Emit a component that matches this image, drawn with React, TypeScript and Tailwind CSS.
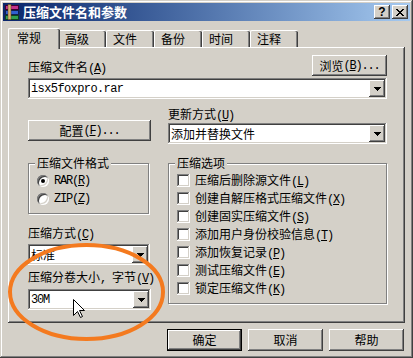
import React from 'react';

const raised =
  'shadow-[inset_-1px_-1px_#404040,inset_1px_1px_#ffffff,inset_-2px_-2px_#808080,inset_2px_2px_#d4d0c8]';
const sunken =
  'shadow-[inset_-1px_-1px_#ffffff,inset_1px_1px_#808080,inset_-2px_-2px_#d4d0c8,inset_2px_2px_#404040]';
const defBtn =
  'shadow-[inset_-1px_-1px_#000000,inset_1px_1px_#000000,inset_-2px_-2px_#404040,inset_2px_2px_#ffffff,inset_-3px_-3px_#808080]';
const mono = "font-['Liberation_Mono',monospace] tracking-[-1.2px]";

const Key = ({ k, tail }: { k: string; tail?: string }) => (
  <span className={mono}>
    (<span className="underline underline-offset-[1px]">{k}</span>){tail}
  </span>
);

const Tri = () => (
  <svg width="7" height="4" shapeRendering="crispEdges">
    <path d="M0 0h7v1h-1v1h-1v1h-1v1h-1v-1h-1v-1h-1v-1h-1z" fill="#000" />
  </svg>
);

const Combo = ({ children, className = '' }: { children: React.ReactNode; className?: string }) => (
  <div className={`h-[21px] bg-white flex p-[2px] ${sunken} ${className}`}>
    <div className="flex-1 flex items-center pl-[1px] whitespace-nowrap overflow-hidden leading-[14px]">
      {children}
    </div>
    <div className={`w-[16px] bg-[#d4d0c8] flex items-center justify-center ${raised}`}>
      <Tri />
    </div>
  </div>
);

const Btn = ({
  children,
  className = '',
  def = false,
}: {
  children: React.ReactNode;
  className?: string;
  def?: boolean;
}) => (
  <div
    className={`h-[21px] bg-[#d4d0c8] flex items-center justify-center whitespace-nowrap leading-[14px] ${
      def ? defBtn : raised
    } ${className}`}
  >
    {children}
  </div>
);

const Group = ({
  title,
  className = '',
  children,
}: {
  title: string;
  className?: string;
  children: React.ReactNode;
}) => (
  <div
    className={`relative border border-[#808080] shadow-[1px_1px_0_#ffffff,inset_1px_1px_0_#ffffff] ${className}`}
  >
    <span className="absolute -top-[8px] left-[6px] px-[2px] bg-[#d4d0c8] leading-[14px]">{title}</span>
    {children}
  </div>
);

const Radio = ({ on }: { on?: boolean }) => (
  <div className="w-[12px] h-[12px] rounded-full bg-white flex items-center justify-center shadow-[inset_1px_1px_#808080,inset_-1px_-1px_#ffffff,inset_2px_2px_#404040,inset_-2px_-2px_#d4d0c8]">
    {on && <div className="w-[4px] h-[4px] rounded-full bg-black" />}
  </div>
);

const Check = () => <div className={`w-[13px] h-[13px] bg-white ${sunken}`} />;

const closeGlyph = ['11....11', '.11..11.', '..1111..', '...11...', '..1111..', '.11..11.', '11....11'];

const options: [string, string][] = [
  ['压缩后删除源文件', 'L'],
  ['创建自解压格式压缩文件', 'X'],
  ['创建固实压缩文件', 'S'],
  ['添加用户身份校验信息', 'T'],
  ['添加恢复记录', 'P'],
  ['测试压缩文件', 'E'],
  ['锁定压缩文件', 'K'],
];

const tabs = ['高级', '文件', '备份', '时间', '注释'];

const App = () => {
  return (
    <div className="relative w-[413px] h-[358px] overflow-hidden bg-[#d4d0c8] p-[3px] text-[12px] text-black font-['Noto_Sans_CJK_SC','Noto_Sans',sans-serif] shadow-[inset_-1px_-1px_#404040,inset_1px_1px_#d4d0c8,inset_-2px_-2px_#808080,inset_2px_2px_#ffffff]">
      {/* title bar */}
      <div className="h-[18px] flex items-center pl-[1px] pr-[2px] bg-linear-to-r from-[#0a246a] to-[#a6caf0]">
        <svg width="16" height="16" viewBox="0 0 16 16">
          <rect x="1.5" y="1.5" width="13" height="4" fill="#c0308a" stroke="#400030" />
          <rect x="1.5" y="6.5" width="13" height="4" fill="#3060d0" stroke="#102050" />
          <rect x="1.5" y="11.5" width="13" height="4" fill="#30a050" stroke="#104020" />
          <rect x="4" y="0.5" width="3" height="15" fill="#d8b070" stroke="#604020" strokeWidth="0.5" />
        </svg>
        <span className="ml-[3px] text-white font-bold text-[13px] leading-[16px]">压缩文件名和参数</span>
        <div className="ml-auto flex gap-[2px]">
          <div
            className={`w-[16px] h-[14px] bg-[#d4d0c8] flex items-center justify-center font-['Liberation_Sans',sans-serif] font-bold text-[12px] leading-[12px] ${raised}`}
          >
            ?
          </div>
          <div className={`w-[16px] h-[14px] bg-[#d4d0c8] flex items-center justify-center ${raised}`}>
            <svg width="8" height="7" shapeRendering="crispEdges">
              {closeGlyph.map((row, y) =>
                row.split('').map((c, x) => (c === '1' ? <rect key={`${x}-${y}`} x={x} y={y} width="1" height="1" fill="#000" /> : null))
              )}
            </svg>
          </div>
        </div>
      </div>

      {/* tabs */}
      <div className="mt-[7px] h-[19px] flex items-end pl-[7px]">
        <div className="relative z-10 -mx-[2px] -mb-[2px] w-[52px] h-[21px] bg-[#d4d0c8] rounded-t-[2px] border-l border-t border-white shadow-[inset_-1px_0_#404040,inset_-2px_0_#808080] pl-[8px] pt-[2px] leading-[14px]">
          常规
        </div>
        {tabs.map((t) => (
          <div
            key={t}
            className="w-[48px] h-[17px] rounded-t-[2px] border-l border-t border-white shadow-[inset_-1px_0_#404040,inset_-2px_0_#808080] pl-[6px] pt-[1px] leading-[14px]"
          >
            {t}
          </div>
        ))}
      </div>

      {/* panel */}
      <div className="mx-[5px] h-[276px] pt-[8px] pl-[20px] pr-[18px] shadow-[inset_-1px_-1px_#404040,inset_1px_1px_#ffffff,inset_-2px_-2px_#808080]">
        <div className="h-[21px] flex items-end justify-between">
          <div className="leading-[14px]">
            压缩文件名<Key k="A" />
          </div>
          <Btn className="w-[75px]">
            浏览<Key k="B" tail="..." />
          </Btn>
        </div>
        <Combo className="mt-[2px]">
          <span className="font-['Liberation_Mono',monospace] tracking-[-0.6px]">isx5foxpro.rar</span>
        </Combo>

        <div className="mt-[8px] flex gap-[17px]">
          <div className="w-[123px] pt-[13px]">
            <Btn>
              配置<Key k="F" tail="..." />
            </Btn>
          </div>
          <div className="flex-1">
            <div className="leading-[14px]">
              更新方式<Key k="U" />
            </div>
            <Combo>添加并替换文件</Combo>
          </div>
        </div>

        <div className="mt-[19px] flex gap-[17px]">
          <div className="w-[123px]">
            <Group title="压缩文件格式" className="w-[121px] h-[51px] pt-[11px] pl-[8px]">
              <div className="flex flex-col gap-[6px]">
                <div className="flex items-center gap-[5px] h-[12px] leading-[14px]">
                  <Radio on />
                  <span className={mono}>
                    RAR(<span className="underline underline-offset-[1px]">R</span>)
                  </span>
                </div>
                <div className="flex items-center gap-[5px] h-[12px] leading-[14px]">
                  <Radio />
                  <span className={mono}>
                    ZIP(<span className="underline underline-offset-[1px]">Z</span>)
                  </span>
                </div>
              </div>
            </Group>
            <div className="mt-[12px] leading-[14px]">
              压缩方式<Key k="C" />
            </div>
            <Combo className="mt-[2px] w-[122px]">标准</Combo>
            <div className="mt-[5px] leading-[14px] whitespace-nowrap">
              压缩分卷大小<span className={mono}>, </span>字节<Key k="V" />
            </div>
            <Combo className="mt-[3px]">
              <span className={mono}>30M</span>
            </Combo>
          </div>
          <Group title="压缩选项" className="flex-1 h-[141px] pt-[10px] pl-[8px]">
            <div className="flex flex-col gap-[5px]">
              {options.map(([t, k]) => (
                <div key={k} className="flex items-center gap-[5px] h-[13px] leading-[14px] whitespace-nowrap">
                  <Check />
                  <span>
                    {t}
                    <Key k={k} />
                  </span>
                </div>
              ))}
            </div>
          </Group>
        </div>
      </div>

      {/* dialog buttons */}
      <div className="mt-[6px] flex justify-end gap-[6px] pr-[6px]">
        <Btn def className="w-[75px] h-[22px]">
          确定
        </Btn>
        <Btn className="w-[75px] h-[22px]">取消</Btn>
        <Btn className="w-[75px] h-[22px]">帮助</Btn>
      </div>

      {/* annotation ellipse */}
      <svg className="absolute left-0 top-0 pointer-events-none" width="413" height="358">
        <ellipse cx="86.5" cy="292" rx="76.5" ry="47" fill="none" stroke="#f47a1f" strokeWidth="4" />
      </svg>
      {/* mouse cursor */}
      <svg className="absolute left-[73px] top-[299px] pointer-events-none" width="13" height="20">
        <path
          d="M0.5 0.5 L0.5 16.5 L4.5 12.5 L7.5 18.5 L9.5 17.5 L6.5 11.5 L11.5 11.5 Z"
          fill="#fff"
          stroke="#000"
          strokeWidth="1"
          strokeLinejoin="miter"
        />
      </svg>
    </div>
  );
};

export default App;
